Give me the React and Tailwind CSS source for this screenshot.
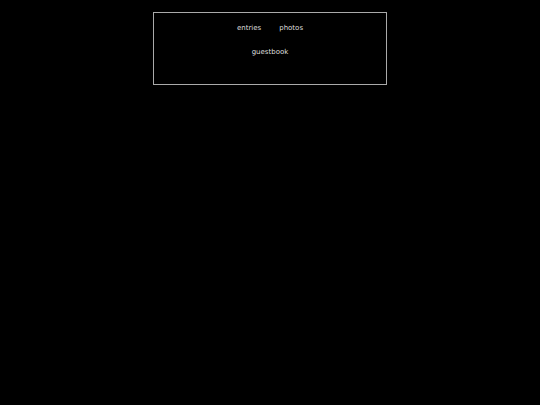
export default function App() {
  return (
    <div className="min-h-screen bg-black pt-[12px]" style={{ fontFamily: '"DejaVu Sans", sans-serif' }}>
      <div className="mx-auto w-[234px] h-[73px] border border-[#aaa] flex flex-col items-center pt-[10px] gap-[14px] text-[7px] leading-[10px] text-[#ddd]">
        <div className="flex gap-[18px]">
          <a>entries</a>
          <a>photos</a>
        </div>
        <a>guestbook</a>
      </div>
    </div>
  );
}
